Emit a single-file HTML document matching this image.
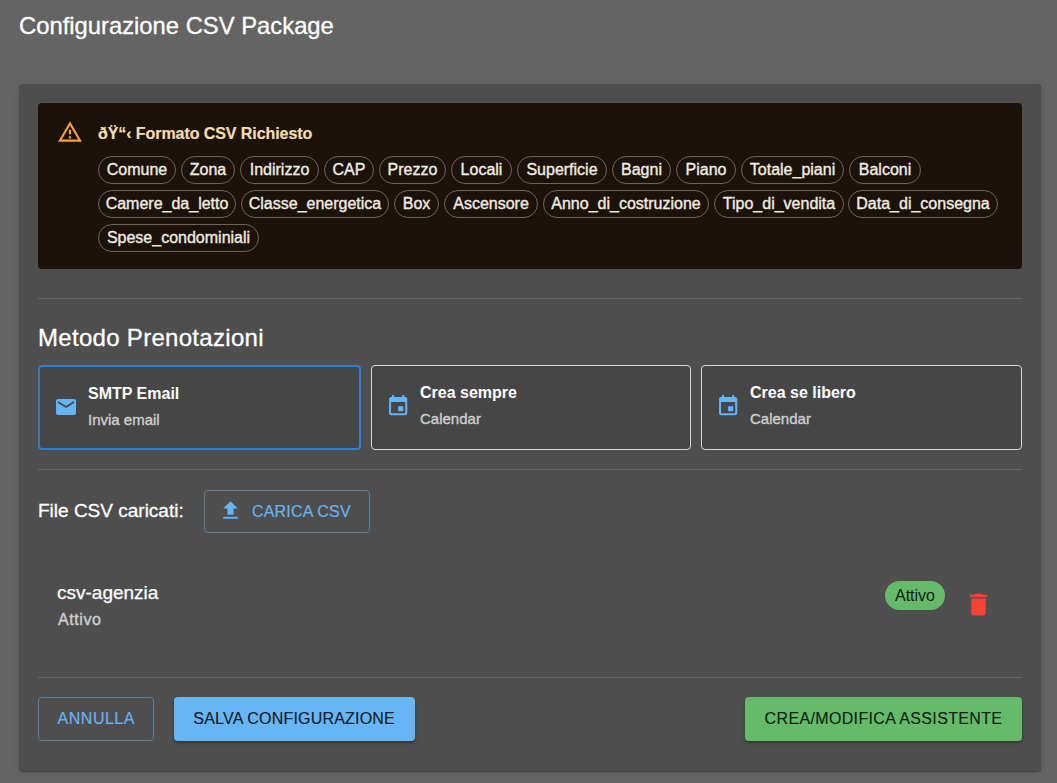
<!DOCTYPE html>
<html><head><meta charset="utf-8">
<style>
*{box-sizing:border-box;margin:0;padding:0}
html,body{width:1057px;height:783px;overflow:hidden;background:#646464;font-family:"Liberation Sans",sans-serif;color:#fff}
.abs{position:absolute;white-space:nowrap}
#title{left:19px;top:11.7px;font-size:23.8px;line-height:28px;color:#fff;-webkit-text-stroke:0.3px #fff}
#dlg{position:absolute;left:19px;top:84px;width:1022px;height:687px;background:#4e4e4e;border-radius:4px;box-shadow:0 1px 1px rgba(0,0,0,.3),0 2px 6px rgba(0,0,0,.12)}
#alert{position:absolute;left:38px;top:103px;width:984px;height:166px;background:#1b1309;border-radius:4px}
#alert-title{left:98px;top:124.7px;letter-spacing:-0.07px;font-size:16px;font-weight:700;line-height:18px;color:#f5ddb0;-webkit-text-stroke:0.2px #f5ddb0}
.chip{position:absolute;height:28px;border:1px solid #6b655c;border-radius:14px;color:#f3ede3;font-size:16px;line-height:26px;text-align:center;white-space:nowrap;-webkit-text-stroke:0.35px #f3ede3}
.divider{position:absolute;left:38px;width:984px;height:1px;background:#646464}
#metodo{left:38px;top:324.7px;font-size:24px;line-height:26px;color:#fff;letter-spacing:0.3px;-webkit-text-stroke:0.3px #fff}
.opt{position:absolute;top:365px;height:85px;background:#464646;border:1px solid #dadada;border-radius:4px}
.opt.sel{border:2px solid #2f7dd0}
.opt .t{position:absolute;font-size:16px;font-weight:700;color:#fff;white-space:nowrap;line-height:18px}
.opt .s{position:absolute;font-size:15px;color:#cfcfcf;white-space:nowrap;line-height:18px;-webkit-text-stroke:0.35px #cfcfcf}
.btn-o{position:absolute;border:1px solid #5a7f9f;border-radius:4px;color:#66b3f2;font-size:17px;text-align:center;-webkit-text-stroke:0.25px #66b3f2}
</style></head><body>
<div id="title" class="abs">Configurazione CSV Package</div>
<div id="dlg"></div>
<div id="alert"></div>
<svg class="abs" style="left:56.8px;top:119px" width="26" height="26" viewBox="0 0 24 24"><path fill="#f0a33a" d="M12 5.99 19.53 19H4.47L12 5.99M12 2 1 21h22L12 2zm1 14h-2v2h2v-2zm0-6h-2v4h2v-4z"/></svg>
<div id="alert-title" class="abs">ðŸ“‹ Formato CSV Richiesto</div>

<div class="chip" style="left:98px;top:156px;width:78px">Comune</div>
<div class="chip" style="left:181px;top:156px;width:54px">Zona</div>
<div class="chip" style="left:240px;top:156px;width:79px">Indirizzo</div>
<div class="chip" style="left:324px;top:156px;width:50px">CAP</div>
<div class="chip" style="left:379px;top:156px;width:67px">Prezzo</div>
<div class="chip" style="left:451px;top:156px;width:61px">Locali</div>
<div class="chip" style="left:517px;top:156px;width:90px">Superficie</div>
<div class="chip" style="left:612px;top:156px;width:59px">Bagni</div>
<div class="chip" style="left:676px;top:156px;width:60px">Piano</div>
<div class="chip" style="left:741px;top:156px;width:103px">Totale_piani</div>
<div class="chip" style="left:849px;top:156px;width:72px">Balconi</div>

<div class="chip" style="left:98px;top:190px;width:138px">Camere_da_letto</div>
<div class="chip" style="left:241px;top:190px;width:148px">Classe_energetica</div>
<div class="chip" style="left:394px;top:190px;width:45px">Box</div>
<div class="chip" style="left:444px;top:190px;width:94px">Ascensore</div>
<div class="chip" style="left:543px;top:190px;width:166px">Anno_di_costruzione</div>
<div class="chip" style="left:714px;top:190px;width:130px">Tipo_di_vendita</div>
<div class="chip" style="left:848px;top:190px;width:150px">Data_di_consegna</div>

<div class="chip" style="left:98px;top:224px;width:161px">Spese_condominiali</div>

<div class="divider" style="top:298px"></div>
<div id="metodo" class="abs">Metodo Prenotazioni</div>

<div class="opt sel" style="left:38px;width:323px">
  <svg style="position:absolute;left:14px;top:27.8px" width="24" height="24" viewBox="0 0 24 24"><path fill="#64b5f6" d="M20 4H4c-1.1 0-1.99.9-1.99 2L2 18c0 1.1.9 2 2 2h16c1.1 0 2-.9 2-2V6c0-1.1-.9-2-2-2zm0 4-8 5-8-5V6l8 5 8-5v2z"/></svg>
  <div class="t" style="left:48px;top:18px">SMTP Email</div>
  <div class="s" style="left:48px;top:44px">Invia email</div>
</div>
<div class="opt" style="left:371px;width:320px">
  <svg style="position:absolute;left:13.8px;top:27.9px" width="24.3" height="24.3" viewBox="0 0 24 24"><path fill="#64b5f6" d="M17 12h-5v5h5v-5zM16 1v2H8V1H6v2H5c-1.11 0-1.99.9-1.99 2L3 19c0 1.1.89 2 2 2h14c1.1 0 2-.9 2-2V5c0-1.1-.9-2-2-2h-1V1h-2zm3 18H5V8h14v11z"/></svg>
  <div class="t" style="left:48px;top:18px">Crea sempre</div>
  <div class="s" style="left:48px;top:44px">Calendar</div>
</div>
<div class="opt" style="left:701px;width:321px">
  <svg style="position:absolute;left:13.8px;top:27.9px" width="24.3" height="24.3" viewBox="0 0 24 24"><path fill="#64b5f6" d="M17 12h-5v5h5v-5zM16 1v2H8V1H6v2H5c-1.11 0-1.99.9-1.99 2L3 19c0 1.1.89 2 2 2h14c1.1 0 2-.9 2-2V5c0-1.1-.9-2-2-2h-1V1h-2zm3 18H5V8h14v11z"/></svg>
  <div class="t" style="left:48px;top:18px">Crea se libero</div>
  <div class="s" style="left:48px;top:44px">Calendar</div>
</div>

<div class="divider" style="top:469px"></div>
<div class="abs" style="left:38px;top:500px;font-size:19px;line-height:22px;color:#fff;-webkit-text-stroke:0.3px #fff">File CSV caricati:</div>
<div class="btn-o" style="left:204px;top:490px;width:166px;height:43px">
  <svg style="position:absolute;left:12.6px;top:7px" width="25" height="25" viewBox="0 0 24 24"><path fill="#64b5f6" d="M5 20h14v-2H5v2zm0-10h4v6h6v-6h4l-7-7-7 7z"/></svg>
  <span class="abs" style="left:47px;top:13px;line-height:16px;font-size:16px;letter-spacing:0.19px;-webkit-text-stroke:0.2px #66b3f2">CARICA CSV</span>
</div>

<div class="abs" style="left:57px;top:582px;font-size:19px;line-height:22px;color:#fff;-webkit-text-stroke:0.25px #fff">csv-agenzia</div>
<div class="abs" style="left:58px;top:610.5px;font-size:16px;line-height:18px;color:#cfcfcf;letter-spacing:0.6px;-webkit-text-stroke:0.4px #cfcfcf">Attivo</div>

<div class="abs" style="left:885px;top:581px;width:60px;height:29px;border-radius:15px;background:#66bb6a;color:#0b1f0c;font-size:16px;line-height:29px;text-align:center">Attivo</div>
<svg class="abs" style="left:964px;top:590.2px" width="29" height="29" viewBox="0 0 24 24"><path fill="#f44336" d="M6 19c0 1.1.9 2 2 2h8c1.1 0 2-.9 2-2V7H6v12zM19 4h-3.5l-1-1h-5l-1 1H5v2h14V4z"/></svg>

<div class="divider" style="top:677px"></div>
<div class="btn-o" style="left:38px;top:697px;width:116px;height:44px"></div>
<span class="abs" style="left:57.6px;top:711px;line-height:16px;font-size:16px;color:#66b3f2;letter-spacing:0.5px;-webkit-text-stroke:0.2px #66b3f2">ANNULLA</span>
<div class="abs" style="left:174px;top:697px;width:241px;height:44px;border-radius:4px;background:#66b5f5;box-shadow:0 2px 3px rgba(0,0,0,.3)"></div>
<span class="abs" style="left:193.3px;top:711px;line-height:16px;font-size:16px;color:#0d1b28;letter-spacing:0.2px;-webkit-text-stroke:0.15px #0d1b28">SALVA CONFIGURAZIONE</span>
<div class="abs" style="left:745px;top:697px;width:277px;height:44px;border-radius:4px;background:#66bb6a;box-shadow:0 2px 3px rgba(0,0,0,.3)"></div>
<span class="abs" style="left:764.6px;top:711px;line-height:16px;font-size:16px;color:#0d1f0e;letter-spacing:0.35px;-webkit-text-stroke:0.15px #0d1f0e">CREA/MODIFICA ASSISTENTE</span>
</body></html>
